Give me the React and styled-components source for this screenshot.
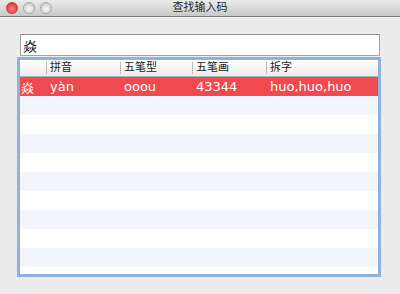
import styled, { createGlobalStyle } from 'styled-components';

const GlobalStyle = createGlobalStyle`
  html, body {
    margin: 0;
    padding: 0;
    background: #ececec;
  }
`;

const FONT = `"DejaVu Sans", "Noto Sans CJK SC", sans-serif`;

const Window = styled.div`
  width: 400px;
  height: 294px;
  background: #ececec;
  display: flex;
  flex-direction: column;
  font-family: ${FONT};
  overflow: hidden;
`;

const TitleBar = styled.div`
  height: 16px;
  flex: none;
  display: flex;
  align-items: center;
  position: relative;
  background: linear-gradient(#ebebeb, #c8c8c8);
  border-bottom: 1px solid #7d7d7d;
`;

const Lights = styled.div`
  display: flex;
  gap: 5px;
  padding-left: 6px;
`;

const Light = styled.span`
  width: 12px;
  height: 12px;
  border-radius: 50%;
  box-sizing: border-box;
  border: 1px solid ${(p) => (p.$red ? '#b8454a' : '#a8a8a8')};
  background: ${(p) =>
    p.$red
      ? 'radial-gradient(circle at 50% 60%, #ff8a8a, #e2383f 70%)'
      : 'radial-gradient(circle at 50% 60%, #f8f8f8, #cfcfcf 75%)'};
`;

const Title = styled.div`
  position: absolute;
  left: 0;
  right: 0;
  text-align: center;
  font-size: 11px;
  color: #2b2b2b;
  line-height: 16px;
`;

const Content = styled.div`
  padding: 17px 20px 0 20px;
  display: flex;
  flex-direction: column;
`;

const SearchField = styled.div`
  height: 22px;
  box-sizing: border-box;
  background: #fff;
  border: 1px solid #a3a3a3;
  border-top-color: #8e8e8e;
  font-size: 14px;
  color: #000;
  padding-left: 2px;
  display: flex;
  align-items: center;
`;

const Table = styled.div`
  margin: 1px -1px 0 -3px;
  height: 220px;
  box-sizing: border-box;
  border: 3px solid #8fb2da;
  box-shadow: inset 0 0 0 1px #b7cde6;
  background: #fff;
  overflow: hidden;
`;

const COLS = '26px 74px 72px 74px 1fr';

const HeaderRow = styled.div`
  display: grid;
  grid-template-columns: ${COLS};
  height: 16px;
  background: linear-gradient(#ffffff, #ececec);
  border-bottom: 1px solid #b5b5b5;
`;

const HeaderCell = styled.div`
  font-size: 11px;
  color: #222;
  line-height: 16px;
  padding-left: 4px;
  position: relative;
  &::before {
    content: '';
    display: ${(p) => (p.$first ? 'none' : 'block')};
    position: absolute;
    left: 0;
    top: 2px;
    bottom: 2px;
    width: 1px;
    background: #b9b9b9;
  }
`;

const Row = styled.div`
  display: grid;
  grid-template-columns: ${COLS};
  height: 19px;
  align-items: center;
  background: ${(p) => (p.$selected ? '#ee4a4f' : p.$stripe ? '#f2f5fa' : '#fff')};
  color: ${(p) => (p.$selected ? '#fff' : '#000')};
  font-size: 13px;
`;

const Cell = styled.div`
  padding-left: ${(p) => (p.$first ? '1px' : '4px')};
  white-space: nowrap;
`;

const headers = ['', '拼音', '五笔型', '五笔画', '拆字'];
const result = ['焱', 'yàn', 'ooou', '43344', 'huo,huo,huo'];

export default function App() {
  const blanks = Array.from({ length: 10 }, (_, i) => i);
  return (
    <>
      <GlobalStyle />
      <Window>
        <TitleBar>
          <Lights>
            <Light $red />
            <Light />
            <Light />
          </Lights>
          <Title>查找输入码</Title>
        </TitleBar>
        <Content>
          <SearchField>焱</SearchField>
          <Table>
            <HeaderRow>
              {headers.map((h, i) => (
                <HeaderCell key={i} $first={i === 0}>
                  {h}
                </HeaderCell>
              ))}
            </HeaderRow>
            <Row $selected>
              {result.map((c, i) => (
                <Cell key={i} $first={i === 0}>
                  {c}
                </Cell>
              ))}
            </Row>
            {blanks.map((i) => (
              <Row key={i} $stripe={i % 2 === 0} />
            ))}
          </Table>
        </Content>
      </Window>
    </>
  );
}
